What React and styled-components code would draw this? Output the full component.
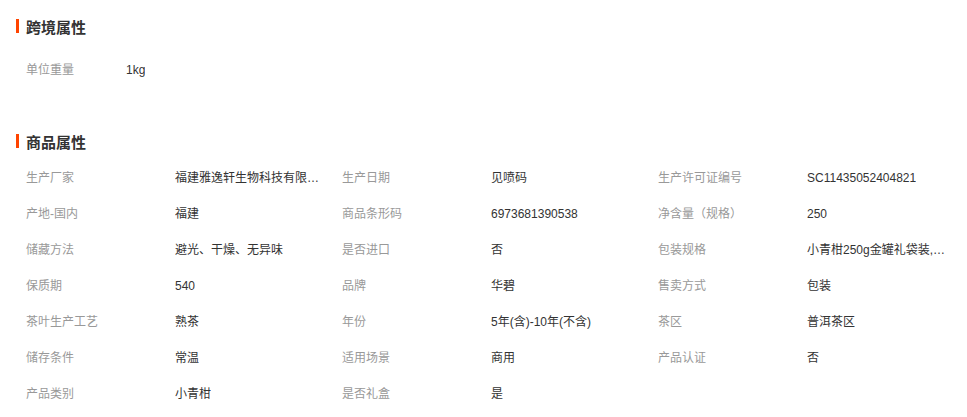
import React from "react"
import styled, { createGlobalStyle } from "styled-components"

const crossBorder = [{ label: "单位重量", value: "1kg" }]

const goods = [
  { label: "生产厂家", value: "福建雅逸轩生物科技有限公司" },
  { label: "生产日期", value: "见喷码" },
  { label: "生产许可证编号", value: "SC11435052404821" },
  { label: "产地-国内", value: "福建" },
  { label: "商品条形码", value: "6973681390538" },
  { label: "净含量（规格）", value: "250" },
  { label: "储藏方法", value: "避光、干燥、无异味" },
  { label: "是否进口", value: "否" },
  { label: "包装规格", value: "小青柑250g金罐礼袋装,一袋两罐" },
  { label: "保质期", value: "540" },
  { label: "品牌", value: "华碧" },
  { label: "售卖方式", value: "包装" },
  { label: "茶叶生产工艺", value: "熟茶" },
  { label: "年份", value: "5年(含)-10年(不含)" },
  { label: "茶区", value: "普洱茶区" },
  { label: "储存条件", value: "常温" },
  { label: "适用场景", value: "商用" },
  { label: "产品认证", value: "否" },
  { label: "产品类别", value: "小青柑" },
  { label: "是否礼盒", value: "是" },
]

const App = () => {
  return (
    <>
      <GlobalStyle />
      <Page>
        <Section>
          <Title>跨境属性</Title>
          <Grid $top={16}>
            {crossBorder.map((item) => (
              <Cell key={item.label}>
                <Label $width={100}>{item.label}</Label>
                <Value>{item.value}</Value>
              </Cell>
            ))}
          </Grid>
        </Section>
        <Section $gap={43}>
          <Title>商品属性</Title>
          <Grid $top={9}>
            {goods.map((item) => (
              <Cell key={item.label}>
                <Label>{item.label}</Label>
                <Value>{item.value}</Value>
              </Cell>
            ))}
          </Grid>
        </Section>
      </Page>
    </>
  )
}

export default App

const GlobalStyle = createGlobalStyle`
  html, body {
    margin: 0;
    padding: 0;
    background: #fff;
  }
  body {
    font-family: "Liberation Sans", "Noto Sans CJK SC", sans-serif;
    font-size: 12px;
    color: #333;
  }
`

const Page = styled.div`
  width: 967px;
  padding: 16px 0 0 16px;
  box-sizing: border-box;
`

const Section = styled.section`
  margin-top: ${(p) => p.$gap || 0}px;
`

const Title = styled.h3`
  display: flex;
  align-items: center;
  gap: 7px;
  margin: 0;
  height: 20px;
  font-size: 15px;
  font-weight: 700;
  color: #333;

  &::before {
    content: "";
    width: 3px;
    height: 14px;
    background: #ff4400;
  }
`

const Grid = styled.div`
  display: grid;
  grid-template-columns: repeat(3, 316px);
  margin: ${(p) => p.$top}px 0 0 10px;
`

const Cell = styled.div`
  display: flex;
  height: 36px;
  line-height: 36px;
  white-space: nowrap;
`

const Label = styled.span`
  flex: none;
  width: ${(p) => p.$width || 149}px;
  color: #999;
`

const Value = styled.span`
  max-width: 148px;
  overflow: hidden;
  text-overflow: ellipsis;
  color: #333;
`
